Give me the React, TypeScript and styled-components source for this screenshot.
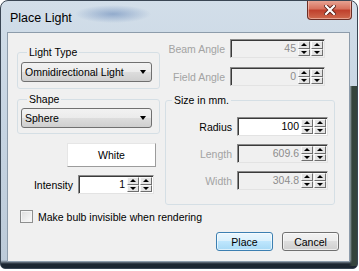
import React from "react";
import styled, { createGlobalStyle } from "styled-components";

const GlobalStyle = createGlobalStyle`
  html, body { margin: 0; padding: 0; background: #fff; }
  body {
    font-family: "Liberation Sans", Arial, sans-serif;
    font-size: 10.5px;
    color: #000;
  }
`;

const Frame = styled.div`
  box-sizing: border-box;
  width: 358px;
  height: 269px;
  border: 1px solid #3a4654;
  border-radius: 8px 8px 5px 5px;
  overflow: hidden;
  display: flex;
  flex-direction: column;
  padding-bottom: 6px;
  background:
    radial-gradient(ellipse 38px 9px at 112px 13px, rgba(70, 110, 170, 0.45), transparent),
    linear-gradient(to right, transparent 348px, #34443c 351px) 0 85px / 100% 180px no-repeat,
    linear-gradient(to bottom, transparent 259px, #1c2631 263px),
    linear-gradient(to bottom, #d2dee9 0%, #c6d4e2 45%, #bccad8 100%);
`;

const TitleBar = styled.div`
  height: 31px;
  display: flex;
  justify-content: space-between;
  align-items: flex-start;
`;

const Title = styled.div`
  padding: 10px 0 0 9px;
  font-size: 12.5px;
  line-height: 15px;
  color: #000;
`;

const CloseButton = styled.div`
  box-sizing: border-box;
  width: 45px;
  height: 20px;
  margin: -1px 5px 0 0;
  border: 1px solid #6b2e25;
  border-top: none;
  border-radius: 0 0 4px 4px;
  background: linear-gradient(to bottom, #e9a898 0%, #d8735f 45%, #c0412d 55%, #cf6a4e 100%);
  box-shadow: inset 0 0 0 1px rgba(255, 220, 210, 0.5);
  display: flex;
  align-items: center;
  justify-content: center;
`;

const Client = styled.div`
  box-sizing: border-box;
  flex: 1;
  margin: 0 7px 0 6px;
  background: #f0f0f0;
  border: 1px solid #8d9cab;
  padding: 6px 7px 0 9px;
  display: flex;
  flex-direction: column;
`;

const TopGrid = styled.div`
  display: grid;
  grid-template-columns: 143px 177px;
  column-gap: 5px;
`;

const Column = styled.div`
  display: flex;
  flex-direction: column;
`;

const Group = styled.fieldset<{ $top: number; $pad: string; $right?: number }>`
  margin: ${(p) => p.$top}px ${(p) => p.$right ?? 0}px 0 0;
  padding: ${(p) => p.$pad};
  border: 1px solid #d5dfe5;
  border-radius: 3px;
  min-width: 0;
`;

const Legend = styled.legend`
  padding: 0 2px;
  margin-left: 6px;
  line-height: 12px;
`;

const Combo = styled.div`
  box-sizing: border-box;
  width: 131px;
  height: 20px;
  border: 1px solid #707070;
  border-radius: 3px;
  background: linear-gradient(to bottom, #f2f2f2 0%, #ebebeb 50%, #dddddd 50%, #cfcfcf 100%);
  display: flex;
  align-items: center;
  justify-content: space-between;
  padding: 0 5px 0 3px;
`;

const ComboArrow = styled.span`
  width: 0;
  height: 0;
  border-left: 3.5px solid transparent;
  border-right: 3.5px solid transparent;
  border-top: 4px solid #000;
`;

const ColorButton = styled.div`
  box-sizing: border-box;
  width: 89px;
  height: 24px;
  margin: 9px 0 0 50px;
  background: #fff;
  border: 1px solid;
  border-color: #e6e6e6 #9c9c9c #9c9c9c #e6e6e6;
  display: flex;
  align-items: center;
  justify-content: center;
`;

const Row = styled.div<{ $top: number }>`
  display: flex;
  align-items: center;
  gap: 5px;
  margin-top: ${(p) => p.$top}px;
`;

const Label = styled.span<{ $w: number; $off?: boolean }>`
  width: ${(p) => p.$w}px;
  text-align: right;
  color: ${(p) => (p.$off ? "#a3a3a3" : "#000")};
`;

const Field = styled.div<{ $w: number; $off?: boolean }>`
  box-sizing: border-box;
  width: ${(p) => p.$w}px;
  height: 19px;
  display: flex;
  align-items: stretch;
  padding: 1px 1px 1px 2px;
  background: ${(p) => (p.$off ? "#f0f0f0" : "#fff")};
  border: 1px solid;
  border-color: #8a8a8a #e3e3e3 #e3e3e3 #8a8a8a;
  box-shadow: inset 1px 1px 0 #3a3a3a;
`;

const Value = styled.span<{ $off?: boolean }>`
  flex: 1;
  text-align: right;
  padding-right: 2px;
  line-height: 15px;
  color: ${(p) => (p.$off ? "#8c8c8c" : "#000")};
`;

const Spin = styled.div`
  display: flex;
  gap: 1px;
`;

const SpinCol = styled.div`
  display: flex;
  flex-direction: column;
  width: 12px;
`;

const SpinButton = styled.div`
  box-sizing: border-box;
  flex: 1;
  background: #e4e4e4;
  border: 1px solid;
  border-color: #fafafa #6f6f6f #6f6f6f #fafafa;
  display: flex;
  align-items: center;
  justify-content: center;
`;

const Tri = styled.span<{ $down?: boolean }>`
  width: 0;
  height: 0;
  border-left: 3px solid transparent;
  border-right: 3px solid transparent;
  ${(p) => (p.$down ? "border-top: 3px solid #000;" : "border-bottom: 3px solid #000;")}
`;

const CheckRow = styled.label`
  display: flex;
  align-items: center;
  gap: 5px;
  margin: 5px 0 0 3px;
  height: 13px;
`;

const CheckBox = styled.span`
  box-sizing: border-box;
  width: 13px;
  height: 13px;
  border: 1px solid #8e8f8f;
  background: linear-gradient(135deg, #dcdcdc, #fbfbfb);
  box-shadow: inset 0 0 0 1px #f4f4f4;
`;

const ButtonRow = styled.div`
  display: flex;
  justify-content: flex-end;
  gap: 9px;
  margin: 9px 3px 0 0;
`;

const PushButton = styled.div<{ $default?: boolean }>`
  box-sizing: border-box;
  width: 57px;
  height: 19px;
  border-radius: 3px;
  display: flex;
  align-items: center;
  justify-content: center;
  border: 1px solid ${(p) => (p.$default ? "#3c7fb1" : "#707070")};
  background: ${(p) =>
    p.$default
      ? "linear-gradient(to bottom, #eaf6fd 0%, #d9f0fc 50%, #bee6fd 50%, #a7d9f5 100%)"
      : "linear-gradient(to bottom, #f2f2f2 0%, #ebebeb 50%, #dddddd 50%, #cfcfcf 100%)"};
  box-shadow: inset 0 0 0 1px rgba(255, 255, 255, 0.6);
`;

function SpinField({ w, value, off }: { w: number; value: string; off?: boolean }) {
  return (
    <Field $w={w} $off={off}>
      <Value $off={off}>{value}</Value>
      <Spin>
        {[0, 1].map((i) => (
          <SpinCol key={i}>
            <SpinButton><Tri /></SpinButton>
            <SpinButton><Tri $down /></SpinButton>
          </SpinCol>
        ))}
      </Spin>
    </Field>
  );
}

export default function App() {
  return (
    <>
      <GlobalStyle />
      <Frame>
        <TitleBar>
          <Title>Place Light</Title>
          <CloseButton>
            <svg width="12" height="10" viewBox="0 0 12 10">
              <path d="M2 1 L10 9 M10 1 L2 9" stroke="#5a2018" strokeWidth="4" strokeLinecap="square" />
              <path d="M2 1 L10 9 M10 1 L2 9" stroke="#fff" strokeWidth="2.2" strokeLinecap="square" />
            </svg>
          </CloseButton>
        </TitleBar>
        <Client>
          <TopGrid>
            <Column>
              <Group $top={7} $pad="4px 6px 6px 3px">
                <Legend>Light Type</Legend>
                <Combo>Omnidirectional Light<ComboArrow /></Combo>
              </Group>
              <Group $top={4} $pad="3px 6px 5px 3px">
                <Legend>Shape</Legend>
                <Combo>Sphere<ComboArrow /></Combo>
              </Group>
              <ColorButton>White</ColorButton>
              <Row $top={8}>
                <Label $w={56}>Intensity</Label>
                <SpinField w={76} value="1" />
              </Row>
            </Column>
            <Column>
              <Row $top={0}>
                <Label $w={60} $off>Beam Angle</Label>
                <SpinField w={95} value="45" off />
              </Row>
              <Row $top={9}>
                <Label $w={60} $off>Field Angle</Label>
                <SpinField w={95} value="0" off />
              </Row>
              <Group $top={8} $right={7} $pad="11px 0 14px 0">
                <Legend>Size in mm.</Legend>
                <Row $top={0}>
                  <Label $w={66}>Radius</Label>
                  <SpinField w={91} value="100" />
                </Row>
                <Row $top={8}>
                  <Label $w={66} $off>Length</Label>
                  <SpinField w={91} value="609.6" off />
                </Row>
                <Row $top={8}>
                  <Label $w={66} $off>Width</Label>
                  <SpinField w={91} value="304.8" off />
                </Row>
              </Group>
            </Column>
          </TopGrid>
          <CheckRow>
            <CheckBox />
            Make bulb invisible when rendering
          </CheckRow>
          <ButtonRow>
            <PushButton $default>Place</PushButton>
            <PushButton>Cancel</PushButton>
          </ButtonRow>
        </Client>
      </Frame>
    </>
  );
}
